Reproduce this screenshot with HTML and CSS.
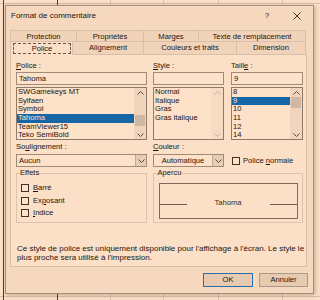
FILE: index.html
```html
<!DOCTYPE html>
<html>
<head>
<meta charset="utf-8">
<link rel="stylesheet" href="styles.css">
</head>
<body>
<div class="dialog">
  <div class="titlebar">
    <span class="title">Format de commentaire</span>
    <span class="help">?</span>
    <span class="close"><svg width="8" height="8" viewBox="0 0 8 8"><path d="M0.5 0.5L7.5 7.5M7.5 0.5L0.5 7.5" stroke="#2a1e16" stroke-width="0.9" fill="none"/></svg></span>
  </div>
  <div class="tabs">
    <div class="tabrow row1">
      <div class="tab t-prot">Protection</div>
      <div class="tab t-prop">Propriétés</div>
      <div class="tab t-marg">Marges</div>
      <div class="tab t-texte">Texte de remplacement</div>
    </div>
    <div class="tabrow row2">
      <div class="tab t-pol sel"><span class="focus">Police</span></div>
      <div class="tab t-align">Alignement</div>
      <div class="tab t-coul">Couleurs et traits</div>
      <div class="tab t-dim">Dimension</div>
    </div>
  </div>
  <div class="panel">
    <div class="row">
      <div class="c1">
        <div class="lbl"><u>P</u>olice :</div>
        <div class="input">Tahoma</div>
        <div class="list">
          <div class="items">
            <div class="item">SWGamekeys MT</div>
            <div class="item">Sylfaen</div>
            <div class="item">Symbol</div>
            <div class="item sel">Tahoma</div>
            <div class="item">TeamViewer15</div>
            <div class="item">Teko SemiBold</div>
          </div>
          <div class="sb">
            <div class="arrow"><svg width="7" height="4" viewBox="0 0 7 4"><polyline points="0.5,3.5 3.5,0.5 6.5,3.5" fill="none" stroke="#5b4a3d"/></svg></div>
            <div class="track"><div class="thumb thumb-pol"></div></div>
            <div class="arrow"><svg width="7" height="4" viewBox="0 0 7 4"><polyline points="0.5,0.5 3.5,3.5 6.5,0.5" fill="none" stroke="#5b4a3d"/></svg></div>
          </div>
        </div>
      </div>
      <div class="c2">
        <div class="lbl"><u>S</u>tyle :</div>
        <div class="input"></div>
        <div class="list">
          <div class="items">
            <div class="item">Normal</div>
            <div class="item">Italique</div>
            <div class="item">Gras</div>
            <div class="item">Gras italique</div>
          </div>
          <div class="sb sb-off">
            <div class="arrow"><svg width="7" height="4" viewBox="0 0 7 4"><polyline points="0.5,3.5 3.5,0.5 6.5,3.5" fill="none" stroke="#c8b19e"/></svg></div>
            <div class="track"></div>
            <div class="arrow"><svg width="7" height="4" viewBox="0 0 7 4"><polyline points="0.5,0.5 3.5,3.5 6.5,0.5" fill="none" stroke="#c8b19e"/></svg></div>
          </div>
        </div>
      </div>
      <div class="c3">
        <div class="lbl">Taill<u>e</u> :</div>
        <div class="input">9</div>
        <div class="list">
          <div class="items">
            <div class="item">8</div>
            <div class="item sel">9</div>
            <div class="item">10</div>
            <div class="item">11</div>
            <div class="item">12</div>
            <div class="item">14</div>
          </div>
          <div class="sb">
            <div class="arrow"><svg width="7" height="4" viewBox="0 0 7 4"><polyline points="0.5,3.5 3.5,0.5 6.5,3.5" fill="none" stroke="#5b4a3d"/></svg></div>
            <div class="track"><div class="thumb"></div></div>
            <div class="arrow"><svg width="7" height="4" viewBox="0 0 7 4"><polyline points="0.5,0.5 3.5,3.5 6.5,0.5" fill="none" stroke="#5b4a3d"/></svg></div>
          </div>
        </div>
      </div>
    </div>
    <div class="row rowb">
      <div class="c1">
        <div class="lbl lbl-b">So<u>u</u>lignement :</div>
        <div class="select">
          <span class="val">Aucun</span>
          <span class="dd"><svg width="7" height="4" viewBox="0 0 7 4"><polyline points="0.5,0.5 3.5,3.5 6.5,0.5" fill="none" stroke="#5b4a3d"/></svg></span>
        </div>
      </div>
      <div class="c2">
        <div class="lbl lbl-b"><u>C</u>ouleur :</div>
        <div class="select">
          <span class="val center">Automatique</span>
          <span class="dd"><svg width="7" height="4" viewBox="0 0 7 4"><polyline points="0.5,0.5 3.5,3.5 6.5,0.5" fill="none" stroke="#5b4a3d"/></svg></span>
        </div>
      </div>
      <div class="c3 normal">
        <div class="chk"><span class="cb"></span><span>Police <u>n</u>ormale</span></div>
      </div>
    </div>
    <div class="row rowc">
      <fieldset class="group g-eff">
        <legend>Effets</legend>
        <div class="chk crow"><span class="cb"></span><span><u>B</u>arré</span></div>
        <div class="chk crow"><span class="cb"></span><span>Ex<u>p</u>osant</span></div>
        <div class="chk crow"><span class="cb"></span><span><u>I</u>ndice</span></div>
      </fieldset>
      <fieldset class="group g-ap">
        <legend>Apercu</legend>
        <div class="preview">
          <div class="pline"></div>
          <div class="ptext">Tahoma</div>
          <div class="pline"></div>
        </div>
      </fieldset>
    </div>
    <p class="note">Ce style de police est uniquement disponible pour l'affichage à l'écran. Le style le plus proche sera utilisé à l'impression.</p>
  </div>
  <div class="buttons">
    <div class="btn ok">OK</div>
    <div class="btn cancel">Annuler</div>
  </div>
</div>
</body>
</html>
```
FILE: styles.css
```css
* { box-sizing: border-box; margin: 0; padding: 0; }
html, body { width: 320px; height: 300px; overflow: hidden; }
body {
  position: relative;
  font-family: "Liberation Sans", Arial, sans-serif;
  font-size: 7.6px;
  line-height: 8px;
  color: #1d140d;
  background-color: #fbdfc6;
  background-image:
    linear-gradient(to right, transparent 3px, #4b3c31 3px, #4b3c31 4px, transparent 4px),
    linear-gradient(to right, transparent 57px, #4b3c31 57px, #4b3c31 58px, transparent 58px),
    linear-gradient(to right, transparent 110px, #d9c0aa 110px, #d9c0aa 111px, transparent 111px),
    linear-gradient(to right, transparent 163px, #d9c0aa 163px, #d9c0aa 164px, transparent 164px),
    linear-gradient(to right, transparent 218px, #d9c0aa 218px, #d9c0aa 219px, transparent 219px),
    linear-gradient(to right, transparent 282px, #d9c0aa 282px, #d9c0aa 283px, transparent 283px),
    linear-gradient(to bottom, transparent 3px, #d9c0aa 3px, #d9c0aa 4px, transparent 4px),
    linear-gradient(to bottom, transparent 296px, #d9c0aa 296px, #d9c0aa 297px, transparent 297px);
}
.dialog {
  position: absolute;
  left: 5px;
  top: 5px;
  width: 309px;
  height: 289px;
  background: #f6d8bf;
  border: 1px solid #a48f7d;
  box-shadow: 1px 1px 4px rgba(90, 60, 40, 0.35);
  display: flex;
  flex-direction: column;
}
.titlebar {
  height: 20px;
  display: flex;
  align-items: center;
  padding-left: 5px;
  padding-right: 6px;
  font-size: 8px;
}
.title { flex: 1; }
.help { width: 20px; text-align: center; }
.close { width: 20px; margin-left: 10px; display: flex; justify-content: center; }
.tabs { margin: 4px 0 0 4px; width: 296px; }
.tabrow { display: flex; height: 12px; }
.tab {
  border: 1px solid #d9bfa9;
  border-right: none;
  background: #f1d3ba;
  text-align: center;
  line-height: 10px;
  padding-top: 1px;
  white-space: nowrap;
}
.tab:last-child { border-right: 1px solid #d9bfa9; }
.row2 .tab { border-top: none; border-bottom: none; }
.t-prot { width: 66px; }
.t-prop { width: 67px; }
.t-marg { width: 55px; }
.t-texte { width: 108px; }
.t-pol { width: 62px; }
.t-align { width: 71px; }
.t-coul { width: 93px; }
.t-dim { width: 70px; }
.tab.sel {
  background: #fbdfc6;
  position: relative;
  z-index: 1;
  height: 13px;
  margin-bottom: -1px;
  padding: 1px 1px 0 2px;
}
.focus {
  display: block;
  width: 58px;
  height: 11px;
  border: 1px dashed #6a5a4c;
  line-height: 9px;
}
.panel {
  margin-left: 4px;
  width: 297px;
  height: 213px;
  background: #fbdfc6;
  border: 1px solid #d9bfa9;
  padding: 7px 3px 4px 5px;
  display: flex;
  flex-direction: column;
}
.row { display: flex; }
.c1 { width: 131px; }
.c2 { width: 71px; margin-left: 6px; }
.c3 { width: 72px; margin-left: 7px; }
.lbl { height: 8px; line-height: 8px; margin-bottom: 2px; }
.input {
  height: 13px;
  border: 1px solid #a08b79;
  background: #fde1c8;
  padding-left: 2px;
  line-height: 11px;
}
.list {
  height: 53px;
  margin-top: 2px;
  border: 1px solid #8e7a69;
  background: #fde1c8;
  display: flex;
}
.items { flex: 1; padding-top: 0.3px; }
.item { height: 8.6px; line-height: 8.6px; padding-left: 1px; white-space: nowrap; }
.item.sel { background: #1766a6; color: #fde1c8; }
.sb { width: 12px; background: #f1d4bb; display: flex; flex-direction: column; }
.sb-off { background: #f7dac1; }
.arrow { height: 9px; display: flex; align-items: center; justify-content: center; }
.track { flex: 1; }
.thumb { height: 11px; margin: 0 1px; background: #d1b8a3; }
.thumb-pol { margin-top: 18px; }
.rowb { margin-top: 3px; }
.lbl-b { margin-bottom: 3px; }
.select {
  height: 13px;
  border: 1px solid #a08b79;
  background: #fde1c8;
  display: flex;
}
.val { flex: 1; padding-left: 2px; line-height: 11px; }
.val.center { text-align: center; padding-left: 0; }
.dd {
  width: 11px;
  background: #e8cdb5;
  border-left: 1px solid #bda895;
  display: flex;
  align-items: center;
  justify-content: center;
}
.normal { padding-top: 11px; }
.chk { display: flex; align-items: center; gap: 3px; }
.normal .chk { height: 13px; padding-left: 1px; }
.cb {
  width: 8px;
  height: 8px;
  border: 1px solid #3f3229;
  background: #fde1c8;
  flex: none;
}
.rowc { margin-top: 2px; }
.group {
  border: 1px solid #dcc3ad;
  height: 54px;
  padding: 5px 4px 0 4px;
  min-width: 0;
}
.group legend { line-height: 8px; padding: 0; margin-left: -1px; }
.g-eff { width: 131px; }
.g-ap { width: 151px; margin-left: 6px; padding-left: 5px; }
.crow { height: 12.5px; gap: 4px; }
.preview {
  margin-top: 1px;
  width: 139px;
  height: 36px;
  border: 1px solid #7f6c5c;
  display: flex;
  align-items: flex-start;
  padding-top: 14px;
}
.pline { width: 27px; height: 1px; background: #6f5d4f; margin-top: 6px; }
.ptext { flex: 1; text-align: center; line-height: 9px; color: #3a2c22; }
.note { margin-top: auto; font-size: 8px; line-height: 9px; width: 290px; padding-left: 1px; }
.buttons {
  display: flex;
  justify-content: flex-end;
  gap: 6px;
  padding-right: 5px;
  margin-top: 6px;
}
.btn {
  height: 14px;
  border: 1px solid #ad9886;
  background: #e6cab2;
  text-align: center;
  line-height: 12px;
}
.ok { width: 50px; border-color: #2b6aa6; }
.cancel { width: 49px; }
```
